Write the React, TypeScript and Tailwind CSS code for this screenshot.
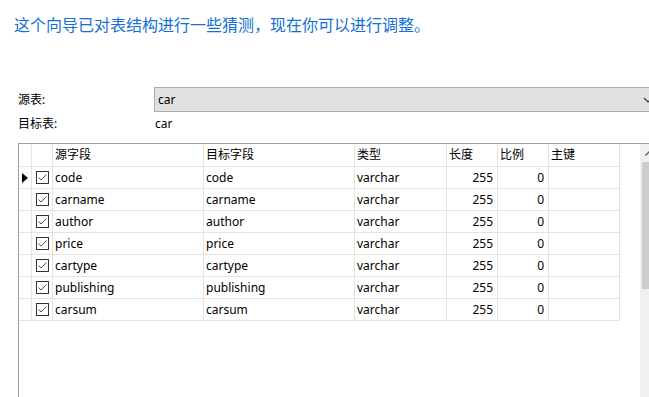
const rows = ['code', 'carname', 'author', 'price', 'cartype', 'publishing', 'carsum']

function Check() {
  return (
    <svg width="13" height="13" viewBox="0 0 13 13" className="block">
      <rect x="0.5" y="0.5" width="12" height="12" fill="#fff" stroke="#333" />
      <path d="M2.5 6.5 L5 9 L10.5 3.5" fill="none" stroke="#555" strokeWidth="1" />
    </svg>
  )
}

const cell = 'border-r border-b border-[#e3e3e3] h-[22px] flex items-center shrink-0'

export default function App() {
  return (
    <div
      className="w-[649px] h-[397px] overflow-hidden bg-white text-[12px] text-black flex flex-col"
      style={{ fontFamily: '"Noto Sans", "Noto Sans CJK SC", sans-serif' }}
    >
      <div className="pl-[14px] pt-[12px] text-[16px] leading-[24px] text-[#1570d4]" style={{ fontFamily: '"Noto Sans CJK SC", sans-serif' }}>
        这个向导已对表结构进行一些猜测，现在你可以进行调整。
      </div>

      <div className="mt-[51px] flex items-center h-[25px]">
        <div className="w-[154px] pl-[18px]">源表:</div>
        <div className="flex-1 h-[25px] border border-[#adadad] bg-[#e1e1e1] flex items-center pl-[3px] -mr-[20px]">
          <span className="flex-1">car</span>
          <svg width="10" height="6" viewBox="0 0 10 6" className="mr-[15px]">
            <path d="M1 1 L5 5 L9 1" fill="none" stroke="#333" strokeWidth="1.2" />
          </svg>
        </div>
      </div>
      <div className="flex items-center h-[24px]">
        <div className="w-[155px] pl-[18px]">目标表:</div>
        <div>car</div>
      </div>

      <div className="mt-[7px] ml-[18px] flex-1 flex border-l border-t border-[#a0a0a0] -mr-[10px]">
        <div className="w-[621px] flex flex-col">
          <div className="flex">
            <div className={`${cell} w-[13px] h-[23px]`} />
            <div className={`${cell} w-[21px] h-[23px]`} />
            <div className={`${cell} w-[151px] h-[23px] pl-[2px]`}>源字段</div>
            <div className={`${cell} w-[151px] h-[23px] pl-[2px]`}>目标字段</div>
            <div className={`${cell} w-[92px] h-[23px] pl-[2px]`}>类型</div>
            <div className={`${cell} w-[51px] h-[23px] pl-[2px]`}>长度</div>
            <div className={`${cell} w-[51px] h-[23px] pl-[2px]`}>比例</div>
            <div className={`${cell} w-[71px] h-[23px] pl-[2px]`}>主键</div>
          </div>
          {rows.map((r, i) => (
            <div key={r} className="flex">
              <div className={`${cell} w-[13px] pl-[3px]`}>
                {i === 0 && (
                  <svg width="6" height="10" viewBox="0 0 6 10">
                    <path d="M0 0 L6 5 L0 10 Z" fill="#000" />
                  </svg>
                )}
              </div>
              <div className={`${cell} w-[21px] pl-[4px]`}>
                <Check />
              </div>
              <div className={`${cell} w-[151px] pl-[2px]`}>{r}</div>
              <div className={`${cell} w-[151px] pl-[2px]`}>{r}</div>
              <div className={`${cell} w-[92px] pl-[2px]`}>varchar</div>
              <div className={`${cell} w-[51px] justify-end pr-[4px]`}>255</div>
              <div className={`${cell} w-[51px] justify-end pr-[4px]`}>0</div>
              <div className={`${cell} w-[71px]`} />
            </div>
          ))}
        </div>
        <div className="w-[17px] bg-[#f0f0f0] flex flex-col">
          <div className="h-[18px] flex items-center justify-center">
            <svg width="8" height="5" viewBox="0 0 8 5">
              <path d="M0.5 4.5 L4 1 L7.5 4.5" fill="none" stroke="#606060" strokeWidth="1.4" />
            </svg>
          </div>
          <div className="mx-[2px] h-[127px] bg-[#cdcdcd]" />
        </div>
      </div>
    </div>
  )
}
